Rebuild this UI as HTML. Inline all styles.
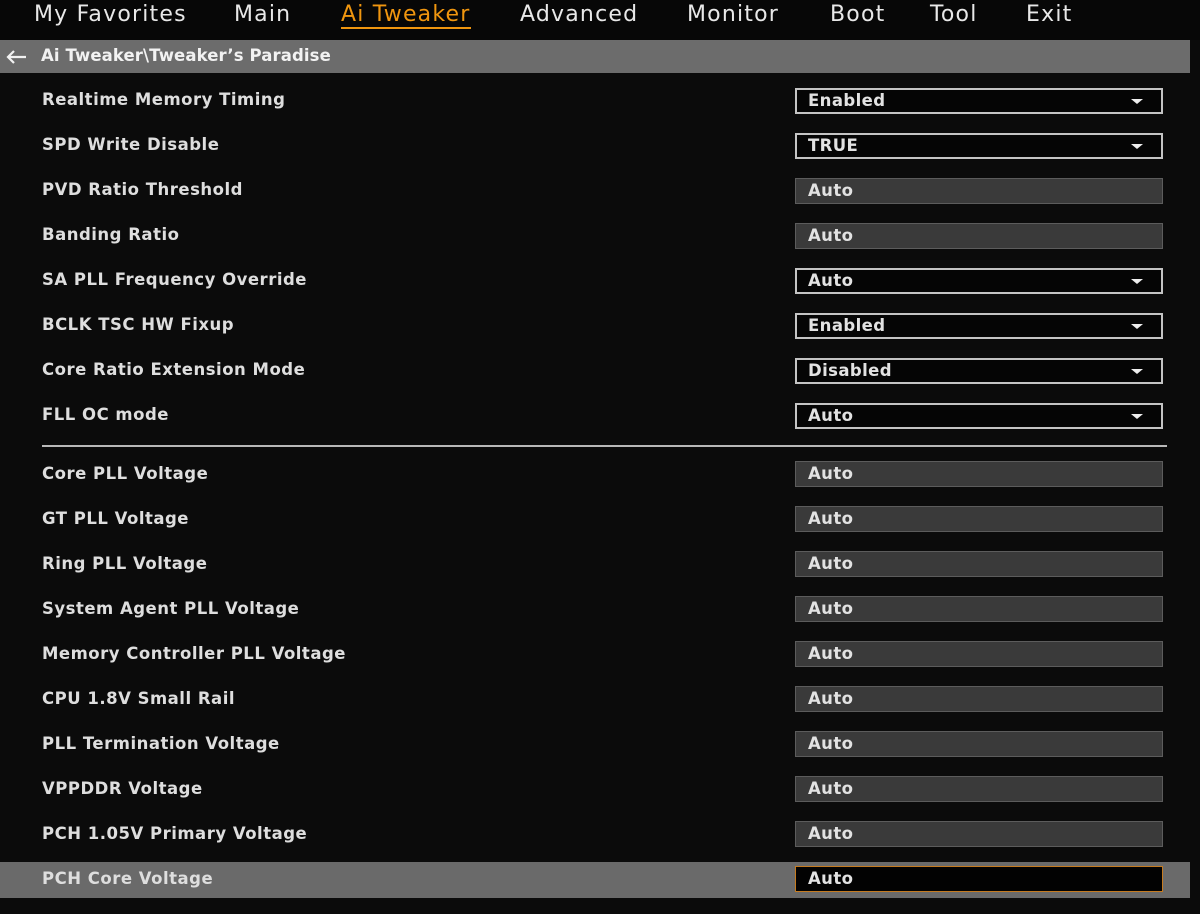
<!DOCTYPE html>
<html><head><meta charset="utf-8"><style>
*{margin:0;padding:0;box-sizing:border-box}
body{width:1200px;height:914px;background:#0b0b0b;position:relative;overflow:hidden;font-family:"DejaVu Sans","Liberation Sans",sans-serif;color:#e6e6e6}
.nav{position:absolute;top:0;left:0;width:1200px;height:40px;background:#070707}
.nav span{position:absolute;top:2px;font-size:22px;color:#e8e8e8;letter-spacing:1.2px}
.nav .act{color:#f0960f;border-bottom:2px solid #f0960f;line-height:25px}
.crumb{position:absolute;top:40px;left:0;width:1190px;height:33px;background:#6c6c6c;font-size:16.5px;font-weight:bold;color:#f2f2f2;letter-spacing:0.1px}
.crumb .t{position:absolute;left:41px;top:6px}
.lbl{position:absolute;left:42px;font-size:16.5px;font-weight:bold;letter-spacing:0.5px;color:#dedede;margin-top:2px}
.box{position:absolute;left:795px;width:368px;height:26px;font-size:16.5px;font-weight:bold;letter-spacing:0.4px;padding-left:11px;line-height:22px;color:#e2e2e2}
.dd{background:#050505;border:2px solid #c4c4c4}
.dd:after{content:"";position:absolute;right:18px;top:9px;border-left:6px solid transparent;border-right:6px solid transparent;border-top:5px solid #eee}
.au{background:#3a3a3a;border:1px solid #5c5c5c;line-height:24px;padding-left:12px}
.hl{position:absolute;left:0;top:862px;width:1190px;height:36px;background:#6a6a6a}
.sel{background:#020202;border:1px solid #c67b20;line-height:24px;padding-left:12px}
</style></head><body>
<div class="nav">
<span style="left:34px">My Favorites</span>
<span style="left:234px">Main</span>
<span class="act" style="left:341px">Ai Tweaker</span>
<span style="left:520px">Advanced</span>
<span style="left:687px">Monitor</span>
<span style="left:830px">Boot</span>
<span style="left:930px">Tool</span>
<span style="left:1026px">Exit</span>
</div>
<div class="crumb"><svg style="position:absolute;left:5px;top:9px" width="22" height="16"><path d="M21 8H3M9 2L3 8l6 6" stroke="#f2f2f2" stroke-width="2.2" fill="none"/></svg><span class="t">Ai Tweaker\Tweaker’s Paradise</span></div>
<div class="hl"></div>
<div style="position:absolute;left:42px;top:445px;width:1125px;height:2px;background:#b8b8b8"></div>

<div class="lbl" style="top:88px">Realtime Memory Timing</div><div class="box dd" style="top:88px">Enabled</div>
<div class="lbl" style="top:133px">SPD Write Disable</div><div class="box dd" style="top:133px">TRUE</div>
<div class="lbl" style="top:178px">PVD Ratio Threshold</div><div class="box au" style="top:178px">Auto</div>
<div class="lbl" style="top:223px">Banding Ratio</div><div class="box au" style="top:223px">Auto</div>
<div class="lbl" style="top:268px">SA PLL Frequency Override</div><div class="box dd" style="top:268px">Auto</div>
<div class="lbl" style="top:313px">BCLK TSC HW Fixup</div><div class="box dd" style="top:313px">Enabled</div>
<div class="lbl" style="top:358px">Core Ratio Extension Mode</div><div class="box dd" style="top:358px">Disabled</div>
<div class="lbl" style="top:403px">FLL OC mode</div><div class="box dd" style="top:403px">Auto</div>

<div class="lbl" style="top:462px">Core PLL Voltage</div><div class="box au" style="top:461px">Auto</div>
<div class="lbl" style="top:507px">GT PLL Voltage</div><div class="box au" style="top:506px">Auto</div>
<div class="lbl" style="top:552px">Ring PLL Voltage</div><div class="box au" style="top:551px">Auto</div>
<div class="lbl" style="top:597px">System Agent PLL Voltage</div><div class="box au" style="top:596px">Auto</div>
<div class="lbl" style="top:642px">Memory Controller PLL Voltage</div><div class="box au" style="top:641px">Auto</div>
<div class="lbl" style="top:687px">CPU 1.8V Small Rail</div><div class="box au" style="top:686px">Auto</div>
<div class="lbl" style="top:732px">PLL Termination Voltage</div><div class="box au" style="top:731px">Auto</div>
<div class="lbl" style="top:777px">VPPDDR Voltage</div><div class="box au" style="top:776px">Auto</div>
<div class="lbl" style="top:822px">PCH 1.05V Primary Voltage</div><div class="box au" style="top:821px">Auto</div>
<div class="lbl" style="top:867px">PCH Core Voltage</div><div class="box sel" style="top:866px">Auto</div>
</body></html>
